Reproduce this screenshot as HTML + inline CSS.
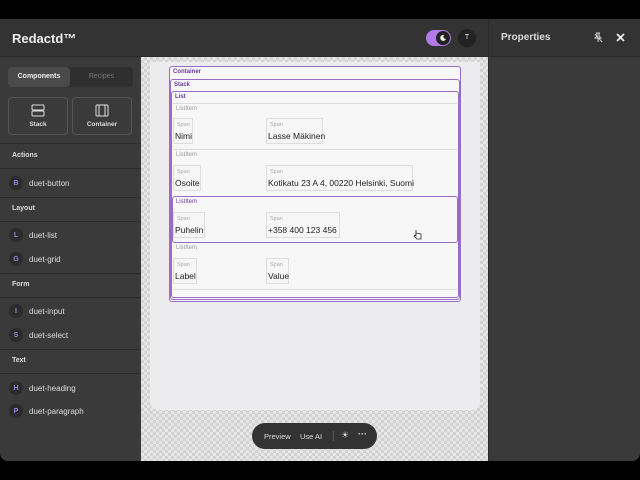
<!DOCTYPE html>
<html><head><meta charset="utf-8"><style>
*{box-sizing:border-box;margin:0;padding:0}
body{width:640px;height:480px;background:#000;font-family:"Liberation Sans",sans-serif;position:relative;overflow:hidden}
.abs{position:absolute}
.app{left:0;top:19px;width:640px;height:442px;background:#3a3a3a;border-radius:0 0 8px 8px;overflow:hidden}
.hdr{left:0;top:0;width:640px;height:38px;background:#333;border-bottom:1px solid #2a2a2a}
.side{left:0;top:38px;width:141px;height:404px;background:#3a3a3a}
.sep{position:absolute;left:0;width:141px;height:1px;background:#2c2c2c}
.sec{position:absolute;left:12px;font-size:7px;color:#ddd;font-weight:bold}
.item{position:absolute;left:9px;font-size:8px;color:#ddd;display:flex;align-items:center}
.item b{width:14px;height:14px;border-radius:7px;background:#2b2b2b;color:#a57be0;font-size:7px;display:inline-flex;align-items:center;justify-content:center;margin-right:6px}
.canvas{left:141px;top:38px;width:347px;height:404px;background-color:#e6e6e6;background-image:linear-gradient(45deg,#d2d2d2 25%,transparent 25%,transparent 75%,#d2d2d2 75%),linear-gradient(45deg,#d2d2d2 25%,transparent 25%,transparent 75%,#d2d2d2 75%);background-size:6px 6px;background-position:0 0,3px 3px}
.frame{left:9px;top:5px;width:330px;height:348px;background:#ececee;border-radius:0 0 8px 8px}
.box{position:absolute;border:1.5px solid #9b6cc6;border-radius:3px;background:#f7f7f8}
.lbl{position:absolute;font-size:6px;color:#6f3a9e;font-weight:bold}
.li{position:absolute;font-size:6px;color:#999}
.sp{position:absolute;border:1px solid #ddd;background:#f6f6f6;font-size:8.5px;color:#222;padding:0 1px;white-space:nowrap}
.sp i{display:block;font-style:normal;font-size:5.5px;color:#aaa;padding:3px 2px 3px}
.line{position:absolute;height:1px;background:#ddd}
.right{left:488px;top:38px;width:152px;height:404px;background:#3a3a3a;border-left:1px solid #2c2c2c}
</style></head><body>
<div class="abs app">
 <div class="abs hdr">
  <div class="abs" style="left:12px;top:12px;font-size:13px;font-weight:bold;color:#eee">Redactd™</div>
  <div class="abs" style="left:426px;top:11px;width:25px;height:16px;border-radius:8px;background:#b07be8"></div>
  <div class="abs" style="left:436px;top:12px;width:14px;height:14px;border-radius:7px;background:#222"></div>
  <svg class="abs" style="left:439px;top:15px" width="8" height="8" viewBox="0 0 8 8"><path d="M5 1A3 3 0 1 0 7 5A2.4 2.4 0 0 1 5 1Z" fill="#eee"/></svg>
  <div class="abs" style="left:458px;top:10px;width:18px;height:18px;border-radius:9px;background:#222;color:#eee;font-size:7px;text-align:center;line-height:18px">T</div>
  <div class="abs" style="left:488px;top:0;width:1px;height:38px;background:#2a2a2a"></div>
  <div class="abs" style="left:501px;top:13px;font-size:10px;font-weight:bold;color:#ddd">Properties</div>
  <svg class="abs" style="left:593px;top:13px" width="10" height="11" viewBox="0 0 10 11"><path d="M3 1h4M4 1v3L2 6h6L6 4V1M5 6v4M2 2l7 8" stroke="#ccc" stroke-width="1" fill="none"/></svg>
  <svg class="abs" style="left:616px;top:14px" width="9" height="9" viewBox="0 0 9 9"><path d="M1 1L8 8M8 1L1 8" stroke="#eee" stroke-width="1.8"/></svg>
 </div>
 <div class="abs side">
  <div class="abs" style="left:8px;top:10px;width:125px;height:20px;background:#2f2f2f;border-radius:4px"></div>
  <div class="abs" style="left:8px;top:10px;width:62px;height:20px;background:#4a4a4a;border-radius:4px;color:#eee;font-size:7px;font-weight:bold;text-align:center;line-height:20px">Components</div>
  <div class="abs" style="left:70px;top:10px;width:63px;height:20px;color:#777;font-size:7px;text-align:center;line-height:20px">Recipes</div>
  <div class="abs" style="left:8px;top:40px;width:60px;height:38px;border:1px solid #555;border-radius:4px;color:#ddd;font-size:6.5px;font-weight:bold;text-align:center">
   <svg style="margin-top:6px" width="14" height="13" viewBox="0 0 14 13"><rect x="1" y="1" width="12" height="5" rx="1" fill="none" stroke="#ddd"/><rect x="1" y="7" width="12" height="5" rx="1" fill="none" stroke="#ddd"/></svg><div style="margin-top:2px">Stack</div></div>
  <div class="abs" style="left:72px;top:40px;width:60px;height:38px;border:1px solid #555;border-radius:4px;color:#ddd;font-size:6.5px;font-weight:bold;text-align:center">
   <svg style="margin-top:6px" width="14" height="13" viewBox="0 0 14 13"><rect x="1" y="1" width="12" height="11" rx="1" fill="none" stroke="#ddd"/><path d="M4 1v11M10 1v11" stroke="#ddd"/></svg><div style="margin-top:2px">Container</div></div>
  <div class="sep" style="top:86px"></div>
  <div class="sec" style="top:95px">Actions</div>
  <div class="sep" style="top:111px"></div>
  <div class="item" style="top:119px"><b>B</b>duet-button</div>
  <div class="sep" style="top:140px"></div>
  <div class="sec" style="top:148px">Layout</div>
  <div class="sep" style="top:164px"></div>
  <div class="item" style="top:171px"><b>L</b>duet-list</div>
  <div class="item" style="top:195px"><b>G</b>duet-grid</div>
  <div class="sep" style="top:216px"></div>
  <div class="sec" style="top:224px">Form</div>
  <div class="sep" style="top:240px"></div>
  <div class="item" style="top:247px"><b>I</b>duet-input</div>
  <div class="item" style="top:271px"><b>S</b>duet-select</div>
  <div class="sep" style="top:292px"></div>
  <div class="sec" style="top:300px">Text</div>
  <div class="sep" style="top:316px"></div>
  <div class="item" style="top:324px"><b>H</b>duet-heading</div>
  <div class="item" style="top:347px"><b>P</b>duet-paragraph</div>
 </div>
 <div class="abs canvas">
  <div class="abs frame"></div>
  <div class="box" style="left:28px;top:9px;width:292px;height:236px"></div>
  <div class="lbl" style="left:32px;top:12px">Container</div>
  <div class="box" style="left:29px;top:22px;width:290px;height:221px"></div>
  <div class="lbl" style="left:33px;top:25px">Stack</div>
  <div class="box" style="left:30px;top:34px;width:288px;height:207px"></div>
  <div class="lbl" style="left:34px;top:37px">List</div>
  <div class="line" style="left:32px;top:46px;width:284px"></div>
  <div class="li" style="left:35px;top:49px">ListItem</div>
  <div class="sp" style="left:32px;top:61px;width:20px;height:26px"><i>Span</i>Nimi</div>
  <div class="sp" style="left:125px;top:61px;width:57px;height:26px"><i>Span</i>Lasse Mäkinen</div>
  <div class="line" style="left:32px;top:92px;width:284px"></div>
  <div class="li" style="left:35px;top:95px">ListItem</div>
  <div class="sp" style="left:32px;top:108px;width:28px;height:26px"><i>Span</i>Osoite</div>
  <div class="sp" style="left:125px;top:108px;width:147px;height:26px"><i>Span</i>Kotikatu 23 A 4, 00220 Helsinki, Suomi</div>
  <div class="box" style="left:31px;top:139px;width:286px;height:47px;background:transparent"></div>
  <div class="lbl" style="left:35px;top:142px;font-weight:normal">ListItem</div>
  <div class="sp" style="left:32px;top:155px;width:32px;height:26px"><i>Span</i>Puhelin</div>
  <div class="sp" style="left:125px;top:155px;width:74px;height:26px"><i>Span</i>+358 400 123 456</div>
  <div class="li" style="left:35px;top:188px">ListItem</div>
  <div class="sp" style="left:32px;top:201px;width:24px;height:26px"><i>Span</i>Label</div>
  <div class="sp" style="left:125px;top:201px;width:23px;height:26px"><i>Span</i>Value</div>
  <div class="line" style="left:32px;top:232px;width:284px"></div>
  <svg class="abs" style="left:272px;top:172px" width="9" height="11" viewBox="0 0 9 11"><path d="M3 1v6L2 6 1 7l3 3h4V5L3 4" fill="#fff" stroke="#222" stroke-width=".8"/></svg>
  <div class="abs" style="left:111px;top:366px;width:125px;height:26px;background:#333;border-radius:13px;color:#ddd;font-size:7.5px">
   <span class="abs" style="left:12px;top:9px">Preview</span>
   <span class="abs" style="left:48px;top:9px">Use AI</span>
   <span class="abs" style="left:81px;top:8px;width:1px;height:10px;background:#555"></span>
   <span class="abs" style="left:89px;top:7px;font-size:9px">☀</span>
   <span class="abs" style="left:106px;top:6px;font-size:9px;font-weight:bold">···</span>
  </div>
 </div>
 <div class="abs right"></div>
</div>
</body></html>
